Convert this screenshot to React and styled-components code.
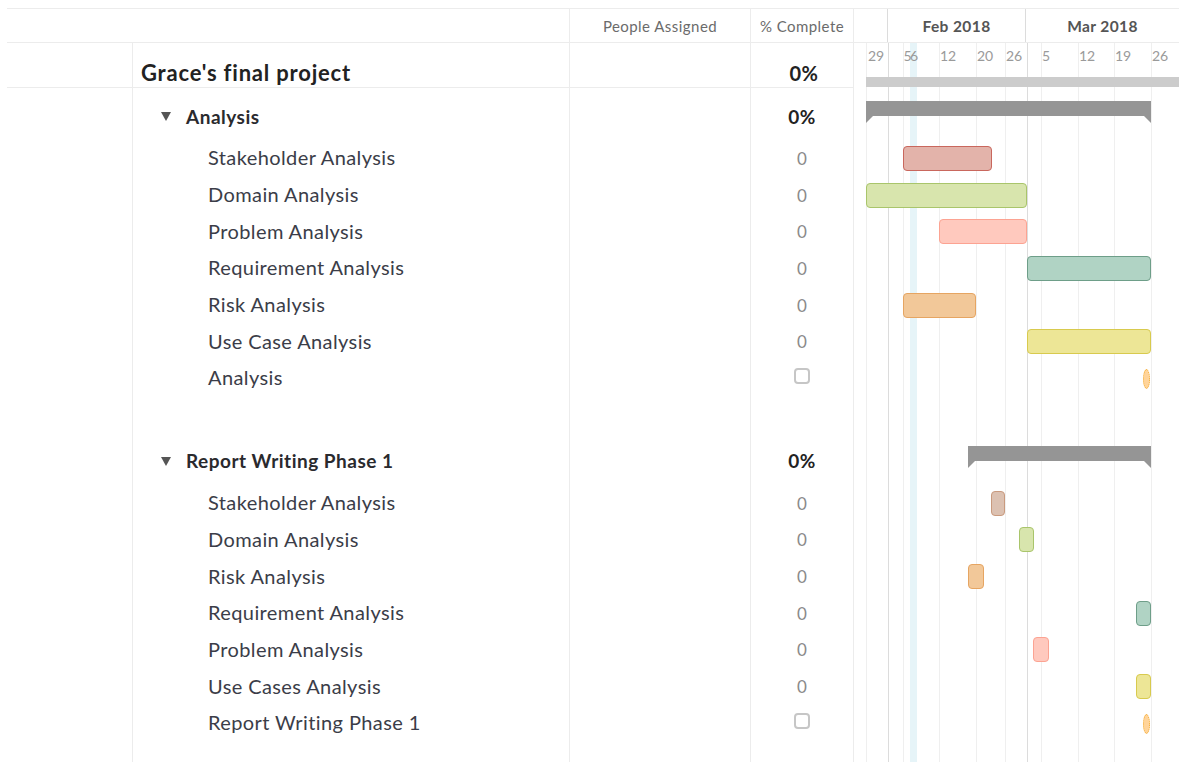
import React from 'react';
import styled, { createGlobalStyle, css } from 'styled-components';

const GlobalStyle = createGlobalStyle`
  html, body { margin: 0; padding: 0; background: #fff; }
  body {
    font-family: Lato, "Open Sans", sans-serif;
    overflow: hidden;
    -webkit-font-smoothing: antialiased;
  }
`;

const LINE = '#ececec';
const TABLE_COLS = '126px 437px 181px 103px 1fr';
const TABLE_WIDTH = 847;
const TASK_ROW = 36.7;

/* ---------- timeline data (pixel offsets from the timeline's left edge) ---------- */

const gridLines = [
  { x: 12 }, { x: 34, month: true }, { x: 49 }, { x: 85 }, { x: 122 },
  { x: 151 }, { x: 173, month: true }, { x: 187 }, { x: 224 }, { x: 260 }, { x: 297 },
];

const dayLabels = [
  { x: 14, t: '29' }, { x: 49.5, t: '5' }, { x: 56, t: '6' }, { x: 86, t: '12' },
  { x: 123, t: '20' }, { x: 152, t: '26' }, { x: 188, t: '5' }, { x: 225, t: '12' },
  { x: 261, t: '19' }, { x: 298, t: '26' },
];

const palette = {
  stake: { fill: '#e3b3aa', edge: '#c9675d' },
  stakeLight: { fill: '#dcc1b1', edge: '#c99a7e' },
  domain: { fill: '#d8e5ad', edge: '#a9c56b' },
  problem: { fill: '#ffc9be', edge: '#fca392' },
  requirement: { fill: '#b0d3c4', edge: '#6e9e89' },
  risk: { fill: '#f2c899', edge: '#e6a562' },
  usecase: { fill: '#ede696', edge: '#d8ca4e' },
};

const groups = [
  {
    name: 'Analysis',
    span: [12, 297],
    tasks: [
      { name: 'Stakeholder Analysis', bar: [49, 138], color: 'stake' },
      { name: 'Domain Analysis', bar: [12, 173], color: 'domain' },
      { name: 'Problem Analysis', bar: [85, 173], color: 'problem' },
      { name: 'Requirement Analysis', bar: [173, 297], color: 'requirement' },
      { name: 'Risk Analysis', bar: [49, 122], color: 'risk' },
      { name: 'Use Case Analysis', bar: [173, 297], color: 'usecase' },
      { name: 'Analysis', milestone: 289 },
    ],
  },
  {
    name: 'Report Writing Phase 1',
    span: [114, 297],
    tasks: [
      { name: 'Stakeholder Analysis', bar: [137, 151], color: 'stakeLight' },
      { name: 'Domain Analysis', bar: [165, 180], color: 'domain' },
      { name: 'Risk Analysis', bar: [114, 130], color: 'risk' },
      { name: 'Requirement Analysis', bar: [282, 297], color: 'requirement' },
      { name: 'Problem Analysis', bar: [179, 195], color: 'problem' },
      { name: 'Use Cases Analysis', bar: [282, 297], color: 'usecase' },
      { name: 'Report Writing Phase 1', milestone: 289 },
    ],
  },
];

/* ---------- layout ---------- */

const Sheet = styled.div`
  margin: 8px 0 0 7px;
  height: 754px;
  display: flex;
  flex-direction: column;
  overflow: hidden;
`;

const HeaderRow = styled.div`
  display: grid;
  grid-template-columns: 563px 181px 103px 1fr;
  height: 35px;
  box-sizing: border-box;
  border-top: 1px solid ${LINE};
  border-bottom: 1px solid ${LINE};
  flex: none;
`;

const HeaderCell = styled.div`
  display: flex;
  align-items: center;
  justify-content: center;
  border-right: 1px solid ${LINE};
  font-size: 15px;
  letter-spacing: 0.45px;
  color: #6b6b6b;
`;

const MonthStrip = styled.div`
  display: grid;
  grid-template-columns: 34px 138px 1fr;
`;

const MonthCell = styled.div`
  display: flex;
  align-items: center;
  justify-content: center;
  font-size: 15.5px;
  font-weight: 700;
  letter-spacing: 0.4px;
  color: #555;
  ${(p) => p.$divider && css`border-right: 1px solid #dcdcdc;`}
`;

const Body = styled.div`
  position: relative;
  flex: 1;
`;

const TimelineBackdrop = styled.div`
  position: absolute;
  top: 0;
  bottom: 0;
  left: ${TABLE_WIDTH}px;
  right: 0;
  pointer-events: none;
`;

const GridLine = styled.div`
  position: absolute;
  top: 0;
  bottom: 0;
  width: 1px;
  background: ${(p) => (p.$month ? '#dcdcdc' : '#efefef')};
`;

const TodayBand = styled.div`
  position: absolute;
  top: 0;
  bottom: 0;
  left: 56px;
  width: 7px;
  background: #e6f4f8;
`;

const Rows = styled.div`
  position: relative;
  display: flex;
  flex-direction: column;
`;

const Row = styled.div`
  display: grid;
  grid-template-columns: ${TABLE_COLS};
  height: ${(p) => p.$h}px;
  flex: none;
`;

const Cell = styled.div`
  box-sizing: border-box;
  border-right: 1px solid ${LINE};
  ${(p) => p.$ruled && css`border-bottom: 1px solid ${LINE};`}
`;

const NameCell = styled(Cell)`
  display: flex;
  align-items: ${(p) => (p.$kind === 'title' ? 'flex-end' : 'center')};
  white-space: nowrap;
  ${(p) =>
    p.$kind === 'title' &&
    css`
      padding: 0 0 1px 8px;
      font-size: 22px;
      font-weight: 700;
      letter-spacing: 0.8px;
      color: #222;
    `}
  ${(p) =>
    p.$kind === 'group' &&
    css`
      padding-left: 28px;
      font-size: 19px;
      font-weight: 700;
      letter-spacing: 0.5px;
      color: #2a2a2e;
      gap: 15px;
    `}
  ${(p) =>
    p.$kind === 'task' &&
    css`
      padding-left: 75px;
      font-size: 20px;
      letter-spacing: 0.4px;
      color: #3b3d48;
    `}
`;

const CompleteCell = styled(Cell)`
  display: flex;
  justify-content: center;
  align-items: ${(p) => (p.$low ? 'flex-end' : 'center')};
  padding: ${(p) => (p.$low ? '0 0 2px 4px' : p.$bold ? '0' : '2px 0 0')};
  font-size: ${(p) => (p.$low ? '20px' : p.$bold ? '19px' : '17px')};
  font-weight: ${(p) => (p.$bold ? 700 : 400)};
  letter-spacing: ${(p) => (p.$bold ? '0.5px' : '0')};
  color: ${(p) => (p.$bold ? '#222' : '#8a8a8a')};
`;

const TimelineCell = styled.div`
  position: relative;
`;

const Caret = styled.span`
  width: 0;
  height: 0;
  border-left: 5px solid transparent;
  border-right: 5px solid transparent;
  border-top: 9px solid #555;
  margin-top: 1px;
`;

const Checkbox = styled.span`
  width: 16px;
  height: 16px;
  box-sizing: border-box;
  border: 2px solid #c6c6c6;
  border-radius: 4px;
  margin-top: -4px;
`;

const DayLabel = styled.span`
  position: absolute;
  top: 5px;
  font-size: 14px;
  color: #9a9a9a;
  line-height: 16px;
`;

const ProjectBar = styled.div`
  position: absolute;
  top: 34px;
  left: 12px;
  right: -20px;
  height: 10px;
  background: #cccccc;
`;

const SummaryBar = styled.div`
  position: absolute;
  top: 8px;
  height: 15px;
  background: #959595;
  &::before,
  &::after {
    content: '';
    position: absolute;
    top: 15px;
    width: 0;
    height: 0;
    border-top: 7px solid #959595;
  }
  &::before {
    left: 0;
    border-right: 7px solid transparent;
  }
  &::after {
    right: 0;
    border-left: 7px solid transparent;
  }
`;

const TaskBar = styled.div`
  position: absolute;
  top: 50%;
  height: 25px;
  margin-top: -11.5px;
  box-sizing: border-box;
  border-radius: 4px;
  background: ${(p) => palette[p.$color].fill};
  border: 1.5px solid ${(p) => palette[p.$color].edge};
`;

const Milestone = styled.div`
  position: absolute;
  top: 50%;
  width: 7px;
  height: 20px;
  margin-top: -8px;
  box-sizing: border-box;
  border-radius: 50%;
  background: #ffd49a;
  border: 1.5px dotted #f3a928;
`;

/* ---------- rows ---------- */

function TableRow({ h, ruled, name, kind, complete, timeline }) {
  return (
    <Row $h={h}>
      <Cell $ruled={ruled} />
      {kind ? (
        <NameCell $kind={kind} $ruled={ruled}>
          {kind === 'group' && <Caret />}
          {name}
        </NameCell>
      ) : (
        <Cell $ruled={ruled} />
      )}
      <Cell $ruled={ruled} />
      {complete ? complete : <Cell $ruled={ruled} />}
      <TimelineCell>{timeline}</TimelineCell>
    </Row>
  );
}

function TaskGroup({ group }) {
  return (
    <>
      <TableRow
        h={46}
        kind="group"
        name={group.name}
        complete={<CompleteCell $bold>0%</CompleteCell>}
        timeline={
          <SummaryBar
            style={{ left: group.span[0], width: group.span[1] - group.span[0] }}
          />
        }
      />
      {group.tasks.map((t, i) => (
        <TableRow
          key={i}
          h={TASK_ROW}
          kind="task"
          name={t.name}
          complete={
            <CompleteCell>{t.milestone ? <Checkbox /> : '0'}</CompleteCell>
          }
          timeline={
            t.milestone ? (
              <Milestone style={{ left: t.milestone }} />
            ) : (
              <TaskBar
                $color={t.color}
                style={{ left: t.bar[0], width: t.bar[1] - t.bar[0] }}
              />
            )
          }
        />
      ))}
    </>
  );
}

export default function App() {
  return (
    <>
      <GlobalStyle />
      <Sheet>
        <HeaderRow>
          <HeaderCell />
          <HeaderCell>People Assigned</HeaderCell>
          <HeaderCell>% Complete</HeaderCell>
          <MonthStrip>
            <MonthCell $divider />
            <MonthCell $divider>Feb 2018</MonthCell>
            <MonthCell>Mar 2018</MonthCell>
          </MonthStrip>
        </HeaderRow>
        <Body>
          <TimelineBackdrop>
            <TodayBand />
            {gridLines.map((l) => (
              <GridLine key={l.x} $month={l.month} style={{ left: l.x }} />
            ))}
          </TimelineBackdrop>
          <Rows>
            <TableRow
              h={45}
              ruled
              kind="title"
              name="Grace's final project"
              complete={
                <CompleteCell $ruled $bold $low>
                  0%
                </CompleteCell>
              }
              timeline={
                <>
                  {dayLabels.map((d, i) => (
                    <DayLabel key={i} style={{ left: d.x }}>
                      {d.t}
                    </DayLabel>
                  ))}
                  <ProjectBar />
                </>
              }
            />
            <TableRow h={5} />
            <TaskGroup group={groups[0]} />
            <TableRow h={42} />
            <TaskGroup group={groups[1]} />
            <TableRow h={60} />
          </Rows>
        </Body>
      </Sheet>
    </>
  );
}
